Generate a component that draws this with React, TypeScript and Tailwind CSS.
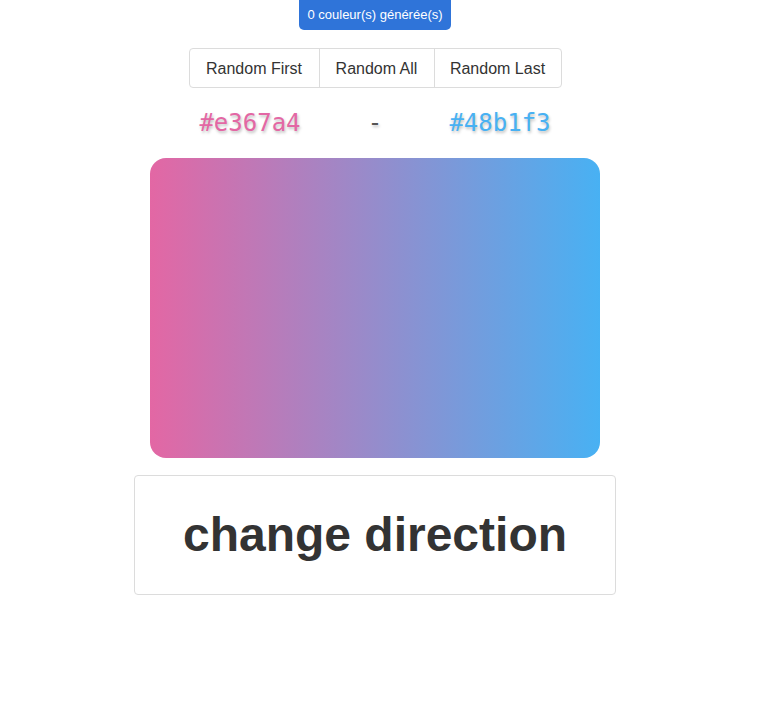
import React from "react";

export default function App() {
  return (
    <div className="w-[750px] min-h-[725px] bg-white flex flex-col items-center" style={{ fontFamily: '"Liberation Sans", Arial, sans-serif' }}>
      <div className="h-[30px] px-[8px] bg-[#2f74d9] text-white text-[13px] leading-[30px] rounded-b-[5px]">
        0 couleur(s) générée(s)
      </div>
      <div className="mt-[18px] flex h-[40px] border border-[#dcdcdc] rounded-[4px] text-[16px] text-[#333]">
        <button className="w-[129px] h-full flex items-center justify-center pt-[1px]">Random First</button>
        <button className="w-[115px] h-full flex items-center justify-center pt-[1px] border-l border-[#dcdcdc]">Random All</button>
        <button className="w-[127px] h-full flex items-center justify-center pt-[1px] border-l border-[#dcdcdc]">Random Last</button>
      </div>
      <div
        className="mt-[18px] grid grid-cols-[125px_125px_125px] text-[24px] leading-[35px]"
        style={{ fontFamily: '"DejaVu Sans Mono", monospace', textShadow: "1px 2px 3px rgba(0,0,0,0.25)" }}
      >
        <div className="text-center text-[#e367a4]">#e367a4</div>
        <div className="text-center text-[#555]">-</div>
        <div className="text-center text-[#48b1f3]">#48b1f3</div>
      </div>
      <div className="mt-[17px] w-[450px] h-[300px] rounded-[16px] bg-linear-to-r/srgb from-[#e367a4] to-[#48b1f3]" />
      <div className="mt-[17px] w-[482px] h-[120px] border border-[#dcdcdc] rounded-[4px] flex items-center justify-center text-[48px] font-bold text-[#333]">
        change direction
      </div>
    </div>
  );
}
